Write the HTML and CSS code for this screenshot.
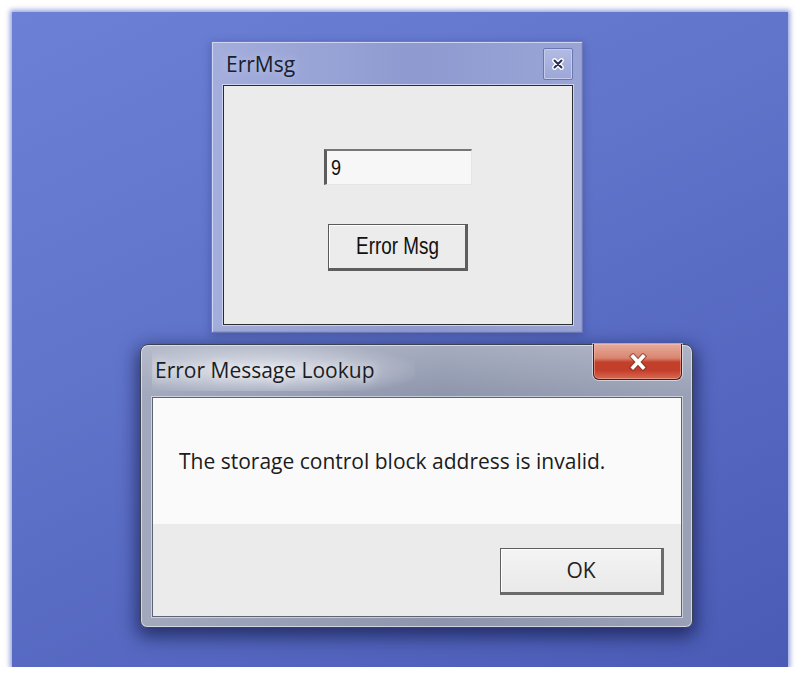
FILE: index.html
```html
<!DOCTYPE html>
<html>
<head>
<meta charset="utf-8">
<link rel="stylesheet" href="styles.css">
</head>
<body>

<div class="desktop">

	<!-- classic test form -->
	<div class="win errmsg">
		<div class="titlebar">
			<span class="title">ErrMsg</span>
			<span class="sm-close">
				<svg width="14" height="14" viewBox="0 0 14 14">
					<path d="M3.5 3.5 L10.5 10.5 M10.5 3.5 L3.5 10.5" stroke="#fff" stroke-width="4.8" stroke-linecap="round"/>
					<path d="M3.5 3.5 L10.5 10.5 M10.5 3.5 L3.5 10.5" stroke="#283052" stroke-width="2" stroke-linecap="round"/>
				</svg>
			</span>
		</div>
		<div class="client">
			<div class="edit"><span>9</span></div>
			<div class="btn3d"><span>Error Msg</span></div>
		</div>
	</div>

	<!-- aero message box -->
	<div class="win lookup">
		<div class="titlebar">
			<span class="title">Error Message Lookup</span>
			<span class="red-close">
				<svg width="20" height="18" viewBox="0 0 20 18">
					<path d="M5 3.5 L15 14.5 M15 3.5 L5 14.5" stroke="#7b2a1d" stroke-opacity=".55" stroke-width="6" stroke-linecap="square"/>
					<path d="M5 3.5 L15 14.5 M15 3.5 L5 14.5" stroke="#fff" stroke-width="3.6" stroke-linecap="square"/>
				</svg>
			</span>
		</div>
		<div class="client">
			<div class="msg">The storage control block address is invalid.</div>
			<div class="footer">
				<div class="ok">OK</div>
			</div>
		</div>
	</div>

</div>

</body>
</html>
```

FILE: styles.css
```css
html {
	background: #fff;
}

body {
	margin: 0;
	font-family: "Open Sans", "Noto Sans", sans-serif;
}

.desktop {
	position: relative;
	height: 655px;
	margin: 12px 14px 0 12px;
	background: linear-gradient(155deg, #6c81d6 0%, #6074ca 40%, #5567c0 70%, #4a5bb6 100%);
	box-shadow: 0 0 5px 2px rgba(100, 118, 206, .7);
}

/*
 * windows
 */
.win {
	position: absolute;
	box-sizing: border-box;
	display: flex;
	flex-direction: column;
}

.titlebar {
	flex: none;
	display: flex;
	align-items: flex-start;
	justify-content: space-between;
}

.title {
	font-size: 21px;
	line-height: 29px;
	padding-left: 3px;
	white-space: nowrap;
}

.client {
	flex: 1;
	display: flex;
	flex-direction: column;
}

/* ErrMsg */
.errmsg {
	left: 199px;
	top: 29px;
	width: 372px;
	height: 292px;
	padding: 0 9px 7px 11px;
	border: 1px solid #6f7bb8;
	background: linear-gradient(to right, #a4aedc, #8e9ad0 55%, #9aa5d6);
	box-shadow: inset 1px 1px 0 #cfd5f0, inset -1px -1px 0 #8e99cc, 0 2px 8px rgba(30, 40, 110, .35);
}

.errmsg .titlebar {
	height: 43px;
}

.errmsg .title {
	padding-top: 8px;
	color: #18202e;
	text-shadow: 0 0 8px #c3cbee;
}

.sm-close {
	margin-top: 6px;
	width: 30px;
	height: 32px;
	box-sizing: border-box;
	border: 1px solid #6b77b0;
	border-radius: 2px;
	background: linear-gradient(#b2bbe3, #9ca7d8);
	box-shadow: inset 0 0 0 1px #c4cbec;
	display: flex;
	align-items: center;
	justify-content: center;
}

.errmsg .client {
	border: 1px solid #2c2c2c;
	background: #ebebeb;
	align-items: center;
	padding-top: 63px;
	box-shadow: 0 0 0 1px #cdd3ef;
}

.edit {
	width: 148px;
	height: 36px;
	box-sizing: border-box;
	border-style: solid;
	border-width: 2px 1px 1px 3px;
	border-color: #767676 #e4e4e4 #e4e4e4 #5c5c5c;
	background: #f7f7f7;
	padding-left: 4px;
	display: flex;
	align-items: center;
	font-family: "Liberation Sans", Arial, sans-serif;
	font-size: 22px;
	color: #111;
}

.edit span,
.btn3d span {
	display: inline-block;
	transform: scaleX(.82);
}

.edit span {
	transform-origin: left center;
}

.btn3d {
	margin-top: 39px;
	width: 140px;
	height: 47px;
	box-sizing: border-box;
	border-style: solid;
	border-width: 1px 3px 3px 1px;
	border-color: #5a5a5a #5e5e5e #5e5e5e #5a5a5a;
	background: #ececec;
	box-shadow: inset 1px 1px 0 #fff;
	display: flex;
	align-items: center;
	justify-content: center;
	font-family: "Liberation Sans", Arial, sans-serif;
	font-size: 23px;
	color: #111;
}

/* Error Message Lookup */
.lookup {
	left: 128px;
	top: 332px;
	width: 553px;
	height: 284px;
	padding: 0 10px 10px 11px;
	border: 1px solid #3b4153;
	border-radius: 8px 8px 7px 7px;
	background:
		linear-gradient(to bottom, rgba(255, 255, 255, .22), rgba(255, 255, 255, 0) 52px),
		linear-gradient(to right, #a2a9bd, #8d95ac 55%, #9aa1b6);
	box-shadow: inset 0 0 0 1px rgba(228, 231, 240, .75), 0 6px 18px 3px rgba(12, 18, 60, .65);
}

.lookup .titlebar {
	height: 52px;
}

.lookup .title {
	padding: 11px 40px 6px 3px;
	color: #1a1d24;
	background: radial-gradient(ellipse 62% 62% at 42% 55%, rgba(236, 238, 244, .85), rgba(236, 238, 244, 0));
	text-shadow: 0 0 10px #fff;
}

.red-close {
	margin-top: -1px;
	width: 89px;
	height: 36px;
	box-sizing: border-box;
	border: 1px solid #4a1f18;
	border-top: 0;
	border-radius: 0 0 6px 6px;
	background: linear-gradient(#e6ab9c 0, #d98670 40%, #c2402b 52%, #c43e2a 75%, #d76a52 100%);
	box-shadow: 0 0 0 1px rgba(255, 255, 255, .5), inset 0 0 0 1px rgba(255, 200, 190, .45);
	display: flex;
	align-items: center;
	justify-content: center;
}

.lookup .client {
	border: 1px solid #5d6372;
	background: #ebebeb;
	box-shadow: 0 0 0 1px rgba(235, 238, 245, .6);
}

.msg {
	height: 126px;
	box-sizing: border-box;
	padding: 49px 0 0 26px;
	background: #fafafa;
	font-size: 21px;
	line-height: 29px;
	color: #1c1c1c;
}

.footer {
	flex: 1;
	display: flex;
	justify-content: flex-end;
	align-items: flex-start;
	padding: 24px 17px 0 0;
}

.ok {
	width: 164px;
	height: 47px;
	box-sizing: border-box;
	border-style: solid;
	border-width: 1px 3px 3px 1px;
	border-color: #5e5e5e #6a6a6a #6a6a6a #5e5e5e;
	background: linear-gradient(#f4f4f4, #e9e9e9);
	box-shadow: inset 1px 1px 0 #fff;
	display: flex;
	align-items: center;
	justify-content: center;
	font-size: 21px;
	line-height: 29px;
	color: #222;
}
```
